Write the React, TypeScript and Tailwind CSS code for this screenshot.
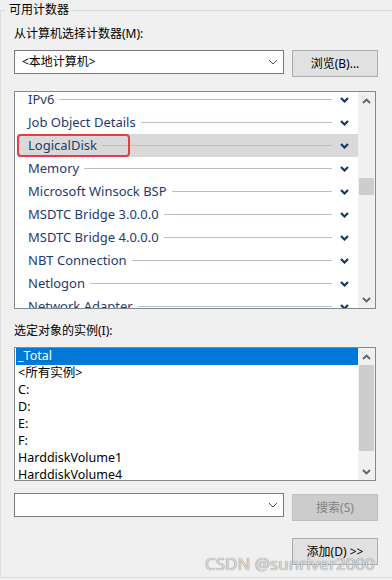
const counters = [
  "IPv6",
  "Job Object Details",
  "LogicalDisk",
  "Memory",
  "Microsoft Winsock BSP",
  "MSDTC Bridge 3.0.0.0",
  "MSDTC Bridge 4.0.0.0",
  "NBT Connection",
  "Netlogon",
  "Network Adapter",
];

const instances = ["_Total", "<所有实例>", "C:", "D:", "E:", "F:", "HarddiskVolume1", "HarddiskVolume4"];

const Chevron = ({ up = false, className = "", w = 1.6 }: { up?: boolean; className?: string; w?: number }) => (
  <svg width="9" height="6" viewBox="0 0 9 6" className={className}>
    <path d={up ? "M1 5 L4.5 1.5 L8 5" : "M1 1 L4.5 4.5 L8 1"} fill="none" stroke="currentColor" strokeWidth={w} />
  </svg>
);

const ComboArrow = () => (
  <svg width="10" height="6" viewBox="0 0 10 6" className="text-[#555]">
    <path d="M1 1 L5 5 L9 1" fill="none" stroke="currentColor" strokeWidth="1" />
  </svg>
);

const ScrollBar = ({ thumbTop, thumbHeight }: { thumbTop: number; thumbHeight: number }) => (
  <div className="w-[17px] h-full bg-[#f0f0f0] flex flex-col">
    <div className="h-[17px] flex items-center justify-center text-[#606060]">
      <Chevron up w={1.8} />
    </div>
    <div className="flex-1 relative">
      <div className="absolute left-[1px] w-[15px] bg-[#cdcdcd]" style={{ top: thumbTop, height: thumbHeight }} />
    </div>
    <div className="h-[17px] flex items-center justify-center text-[#606060]">
      <Chevron w={1.8} />
    </div>
  </div>
);

const Button = ({ label, disabled = false, className = "" }: { label: string; disabled?: boolean; className?: string }) => (
  <div
    className={`w-[86px] h-[27px] border flex items-center justify-center text-[12px] ${
      disabled ? "bg-[#cccccc] border-[#bfbfbf] text-[#838383]" : "bg-[#e1e1e1] border-[#adadad] text-black"
    } ${className}`}
  >
    {label}
  </div>
);

const Combo = ({ value }: { value: string }) => (
  <div className="w-[270px] h-[24px] bg-white border border-[#7a7a7a] flex items-center pl-[7px] pr-[5px]">
    <span className="flex-1 text-[12px] text-black">{value}</span>
    <ComboArrow />
  </div>
);

export default function App() {
  return (
    <div className="w-[392px] h-[580px] bg-[#f0f0f0] relative overflow-hidden font-['Noto_Sans','Noto_Sans_CJK_SC',sans-serif]">
      <fieldset className="w-[420px] h-[578px] border border-[#dcdcdc] pl-[5px]">
        <legend className="px-[3px] text-[12px] leading-[20px] text-black">可用计数器</legend>
        <div className="ml-[8px] flex flex-col">
          <div className="mt-[5px] text-[12px] leading-[18px] text-black">从计算机选择计数器(M):</div>
          <div className="mt-[7px] flex items-start gap-[8px]">
            <Combo value="<本地计算机>" />
            <Button label="浏览(B)..." />
          </div>

          <div className="mt-[14px] w-[362px] h-[218px] border border-[#828790] bg-white flex">
            <div className="flex-1 pl-[2px] overflow-hidden">
              <div className="-mt-[4px]">
                {counters.map((c) => (
                  <div
                    key={c}
                    className={`relative h-[23px] flex items-center pl-[11px] pr-[9px] ${c === "LogicalDisk" ? "bg-[#d9d9d9]" : ""}`}
                  >
                    <span className="text-[13px] text-[#1d3c70] whitespace-nowrap">{c}</span>
                    <div className="flex-1 h-px bg-[#b7c1cc] ml-[5px] mr-[8px]" />
                    <Chevron className="text-[#1a3566]" w={2.2} />
                    {c === "LogicalDisk" && (
                      <div className="absolute left-0 top-0 w-[113px] h-[23px] border-2 border-[#e2403f] rounded-[4px]" />
                    )}
                  </div>
                ))}
              </div>
            </div>
            <ScrollBar thumbTop={69} thumbHeight={17} />
          </div>

          <div className="mt-[13px] text-[12px] leading-[18px] text-black">选定对象的实例(I):</div>
          <div className="mt-[7px] w-[362px] h-[134px] border border-[#828790] bg-white flex">
            <div className="flex-1 pl-[1px] overflow-hidden">
              {instances.map((t, i) => (
                <div
                  key={t}
                  className={`h-[17px] flex items-center pl-[2px] text-[12.5px] ${i === 0 ? "bg-[#0078d7] text-white" : "text-black"}`}
                >
                  {t}
                </div>
              ))}
            </div>
            <ScrollBar thumbTop={0} thumbHeight={86} />
          </div>

          <div className="mt-[12px] flex items-start gap-[8px]">
            <Combo value="" />
            <Button label="搜索(S)" disabled className="mt-[1px]" />
          </div>

          <div className="mt-[17px] ml-[278px]">
            <Button label="添加(D) >>" />
          </div>
        </div>
      </fieldset>
      <div className="absolute left-[205px] top-[551px] text-[17px] text-[#dcdcdc] [text-shadow:0_0_1px_#5a5a5a] whitespace-nowrap">
        CSDN @sunriver2000
      </div>
    </div>
  );
}
